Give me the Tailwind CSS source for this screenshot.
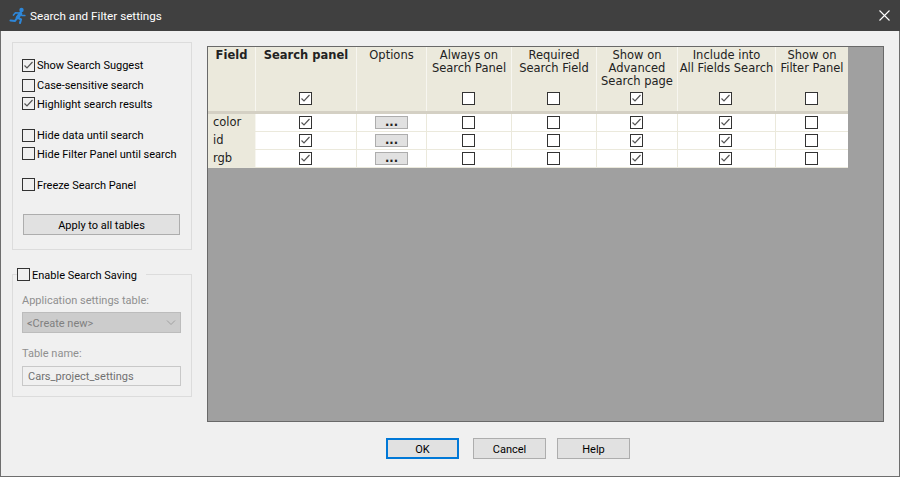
<!DOCTYPE html>
<html><head><meta charset="utf-8"><script src="https://cdn.jsdelivr.net/npm/@tailwindcss/browser@4"></script></head>
<body class="m-0 overflow-hidden">
<div class="w-[900px] h-[477px] bg-[#f0f0f0] border border-[#6e6e6e] border-t-0 flex flex-col font-['Roboto',sans-serif] text-[11px] text-[#000] leading-[14px] whitespace-nowrap">
  <div class="h-[31px] bg-[#404040] flex items-center pl-[9px] pr-[9px] text-white text-[11.7px] shrink-0 -mx-px">
    <svg width="17" height="17" viewBox="0 0 17 17" class="mr-[4px]" fill="none" stroke="#2e87d9" stroke-linecap="round" stroke-linejoin="round"><circle cx="12.500" cy="3" r="2.200" fill="#2e87d9" stroke="none"/><path d="M11.500 6.500 8.500 10.500" stroke-width="3.600"/><path d="M10.500 6 6.500 5.800 4.500 8M11.500 6.500 13 8.500 15.800 8.500" stroke-width="1.700"/><path d="M8.500 10.500 12 12.500 11 16M8 11 6 14 1.500 13.500" stroke-width="2.100"/></svg>
    <span class="flex-1">Search and Filter settings</span>
    <svg width="11" height="11" viewBox="0 0 11 11" class="mr-[1px]"><path d="M.5.500l10 10M10.500.500l-10 10" stroke="#fff" stroke-width="1.100" fill="none"/></svg>
  </div>
  <div class="flex flex-1 min-h-0">
    <div class="w-[180px] ml-[11px] mt-[11px] shrink-0">
      <div class="h-[208px] border border-[#dcdcdc] pl-[9px] pr-[11px] pt-[15px] flex flex-col">
        <label class="flex items-center h-[15px] gap-[1px]"><span class="w-[13px] h-[13px] border border-[#333] flex items-center justify-center shrink-0 mr-[1px]"><svg width="11" height="11" viewBox="0 0 11 11"><path d="M1.500 5.500l2.500 2.500 5.500-6" stroke="#555" stroke-width="1.200" fill="none"/></svg></span>Show Search Suggest</label>
        <label class="flex items-center h-[15px] gap-[1px] mt-[5px]"><span class="w-[13px] h-[13px] border border-[#333] shrink-0 mr-[1px]"></span>Case-sensitive search</label>
        <label class="flex items-center h-[15px] gap-[1px] mt-[4px]"><span class="w-[13px] h-[13px] border border-[#333] -translate-y-px flex items-center justify-center shrink-0 mr-[1px]"><svg width="11" height="11" viewBox="0 0 11 11"><path d="M1.500 5.500l2.500 2.500 5.500-6" stroke="#555" stroke-width="1.200" fill="none"/></svg></span>Highlight search results</label>
        <label class="flex items-center h-[15px] gap-[1px] mt-[16px]"><span class="w-[13px] h-[13px] border border-[#333] shrink-0 mr-[1px]"></span>Hide data until search</label>
        <label class="flex items-center h-[15px] gap-[1px] mt-[4px]"><span class="w-[13px] h-[13px] border border-[#333] -translate-y-px shrink-0 mr-[1px]"></span>Hide Filter Panel until search</label>
        <label class="flex items-center h-[15px] gap-[1px] mt-[16px]"><span class="w-[13px] h-[13px] border border-[#333] -translate-y-px shrink-0 mr-[1px]"></span>Freeze Search Panel</label>
        <button class="mt-[21px] ml-[1px] h-[21px] w-[157px] shrink-0 bg-[#e1e1e1] border border-[#adadad] text-center pt-[2px]">Apply to all tables</button>
      </div>
      <div class="relative mt-[24px] h-[123px] border border-[#dcdcdc] pl-[9px] pr-[10px] pt-[18px] text-[#8f8f8f]">
        <label class="absolute left-[4px] -top-[8px] bg-[#f0f0f0] flex items-center h-[15px] pr-[9px] text-black"><span class="w-[13px] h-[13px] border border-[#333] shrink-0 mr-[2px]"></span><span class="translate-y-px">Enable Search Saving</span></label>
        <div class="h-[14px] translate-y-px">Application settings table:</div>
        <div class="mt-[5px] h-[21px] w-[159px] bg-[#cccccc] border border-[#bcbcbc] flex items-center justify-between pl-[4px] pr-[4px] text-[#808080]"><span class="translate-y-px">&lt;Create new&gt;</span><svg width="10" height="6" viewBox="0 0 10 6"><path d="M1 .500l4 4 4-4" stroke="#a0a0a0" fill="none"/></svg></div>
        <div class="mt-[13px] h-[14px] translate-y-px">Table name:</div>
        <div class="mt-[6px] h-[20px] w-[159px] border border-[#c8c8c8] flex items-center pl-[5px] text-[#707070]"><span class="translate-y-px">Cars_project_settings</span></div>
      </div>
    </div>
    <div class="flex-1 min-w-0 flex flex-col">
      <div class="ml-[15px] mr-[15px] mt-[15px] h-[376px] bg-[#a0a0a0] border border-[#696969] shrink-0 font-['DejaVu_Sans',sans-serif] text-[11.500px] leading-[13px]">
        <div class="w-[640px] flex h-[64px] bg-[#ebe9dc] text-[#222] text-center">
          <div class="w-[48px] border-r border-[#f7f6f0] pt-[2px] font-bold">Field</div>
          <div class="w-[101px] border-r border-[#f7f6f0] pt-[2px] font-bold flex flex-col items-center justify-between pb-[6px]"><span>Search panel</span><span class="w-[13px] h-[13px] -ml-[2px] border border-[#333] bg-white flex items-center justify-center"><svg width="11" height="11" viewBox="0 0 11 11"><path d="M1.500 5.500l2.500 2.500 5.500-6" stroke="#555" stroke-width="1.200" fill="none"/></svg></span></div>
          <div class="w-[70px] border-r border-[#f7f6f0] pt-[2px]">Options</div>
          <div class="w-[85px] border-r border-[#f7f6f0] pt-[2px] flex flex-col items-center justify-between pb-[6px]"><span>Always on<br>Search Panel</span><span class="w-[13px] h-[13px] -ml-[2px] border border-[#333] bg-white"></span></div>
          <div class="w-[85px] border-r border-[#f7f6f0] pt-[2px] flex flex-col items-center justify-between pb-[6px]"><span>Required<br>Search Field</span><span class="w-[13px] h-[13px] -ml-[2px] border border-[#333] bg-white"></span></div>
          <div class="w-[81px] border-r border-[#f7f6f0] pt-[2px] flex flex-col items-center justify-between pb-[6px]"><span>Show on<br>Advanced<br>Search page</span><span class="w-[13px] h-[13px] -ml-[2px] border border-[#333] bg-white flex items-center justify-center"><svg width="11" height="11" viewBox="0 0 11 11"><path d="M1.500 5.500l2.500 2.500 5.500-6" stroke="#555" stroke-width="1.200" fill="none"/></svg></span></div>
          <div class="w-[98px] border-r border-[#f7f6f0] pt-[2px] flex flex-col items-center justify-between pb-[6px]"><span>Include into<br>All Fields Search</span><span class="w-[13px] h-[13px] -ml-[2px] border border-[#333] bg-white flex items-center justify-center"><svg width="11" height="11" viewBox="0 0 11 11"><path d="M1.500 5.500l2.500 2.500 5.500-6" stroke="#555" stroke-width="1.200" fill="none"/></svg></span></div>
          <div class="w-[72px] pt-[2px] flex flex-col items-center justify-between pb-[6px]"><span>Show on<br>Filter Panel</span><span class="w-[13px] h-[13px] -ml-[2px] border border-[#333] bg-white"></span></div>
        </div>
        <div class="w-[640px] h-[3px] bg-[#d4d0c4]"></div>
        <div class="w-[640px] flex h-[18px] bg-white border-b border-[#ebe9dc] items-center text-[#222]">
          <div class="w-[48px] h-full bg-[#ebe9dc] border-r border-[#f7f6f0] pl-[5px] flex items-center">color</div>
          <div class="w-[101px] h-full border-r border-[#ebe9dc] pr-[2px] flex items-center justify-center"><span class="w-[13px] h-[13px] border border-[#333] flex items-center justify-center"><svg width="11" height="11" viewBox="0 0 11 11"><path d="M1.500 5.500l2.500 2.500 5.500-6" stroke="#555" stroke-width="1.200" fill="none"/></svg></span></div>
          <div class="w-[70px] h-full border-r border-[#ebe9dc] flex items-center justify-center"><span class="w-[33px] h-[13px] bg-[#e1e1e1] border border-[#adadad] text-center leading-[10px] font-bold">...</span></div>
          <div class="w-[85px] h-full border-r border-[#ebe9dc] pr-[2px] flex items-center justify-center"><span class="w-[13px] h-[13px] border border-[#333]"></span></div>
          <div class="w-[85px] h-full border-r border-[#ebe9dc] pr-[2px] flex items-center justify-center"><span class="w-[13px] h-[13px] border border-[#333]"></span></div>
          <div class="w-[81px] h-full border-r border-[#ebe9dc] pr-[2px] flex items-center justify-center"><span class="w-[13px] h-[13px] border border-[#333] flex items-center justify-center"><svg width="11" height="11" viewBox="0 0 11 11"><path d="M1.500 5.500l2.500 2.500 5.500-6" stroke="#555" stroke-width="1.200" fill="none"/></svg></span></div>
          <div class="w-[98px] h-full border-r border-[#ebe9dc] pr-[2px] flex items-center justify-center"><span class="w-[13px] h-[13px] border border-[#333] flex items-center justify-center"><svg width="11" height="11" viewBox="0 0 11 11"><path d="M1.500 5.500l2.500 2.500 5.500-6" stroke="#555" stroke-width="1.200" fill="none"/></svg></span></div>
          <div class="w-[72px] h-full pr-[2px] flex items-center justify-center"><span class="w-[13px] h-[13px] border border-[#333]"></span></div>
        </div>
        <div class="w-[640px] flex h-[18px] bg-white border-b border-[#ebe9dc] items-center text-[#222]">
          <div class="w-[48px] h-full bg-[#ebe9dc] border-r border-[#f7f6f0] pl-[5px] flex items-center">id</div>
          <div class="w-[101px] h-full border-r border-[#ebe9dc] pr-[2px] flex items-center justify-center"><span class="w-[13px] h-[13px] border border-[#333] flex items-center justify-center"><svg width="11" height="11" viewBox="0 0 11 11"><path d="M1.500 5.500l2.500 2.500 5.500-6" stroke="#555" stroke-width="1.200" fill="none"/></svg></span></div>
          <div class="w-[70px] h-full border-r border-[#ebe9dc] flex items-center justify-center"><span class="w-[33px] h-[13px] bg-[#e1e1e1] border border-[#adadad] text-center leading-[10px] font-bold">...</span></div>
          <div class="w-[85px] h-full border-r border-[#ebe9dc] pr-[2px] flex items-center justify-center"><span class="w-[13px] h-[13px] border border-[#333]"></span></div>
          <div class="w-[85px] h-full border-r border-[#ebe9dc] pr-[2px] flex items-center justify-center"><span class="w-[13px] h-[13px] border border-[#333]"></span></div>
          <div class="w-[81px] h-full border-r border-[#ebe9dc] pr-[2px] flex items-center justify-center"><span class="w-[13px] h-[13px] border border-[#333] flex items-center justify-center"><svg width="11" height="11" viewBox="0 0 11 11"><path d="M1.500 5.500l2.500 2.500 5.500-6" stroke="#555" stroke-width="1.200" fill="none"/></svg></span></div>
          <div class="w-[98px] h-full border-r border-[#ebe9dc] pr-[2px] flex items-center justify-center"><span class="w-[13px] h-[13px] border border-[#333] flex items-center justify-center"><svg width="11" height="11" viewBox="0 0 11 11"><path d="M1.500 5.500l2.500 2.500 5.500-6" stroke="#555" stroke-width="1.200" fill="none"/></svg></span></div>
          <div class="w-[72px] h-full pr-[2px] flex items-center justify-center"><span class="w-[13px] h-[13px] border border-[#333]"></span></div>
        </div>
        <div class="w-[640px] flex h-[18px] bg-white border-b border-[#ebe9dc] items-center text-[#222]">
          <div class="w-[48px] h-full bg-[#ebe9dc] border-r border-[#f7f6f0] pl-[5px] flex items-center">rgb</div>
          <div class="w-[101px] h-full border-r border-[#ebe9dc] pr-[2px] flex items-center justify-center"><span class="w-[13px] h-[13px] border border-[#333] flex items-center justify-center"><svg width="11" height="11" viewBox="0 0 11 11"><path d="M1.500 5.500l2.500 2.500 5.500-6" stroke="#555" stroke-width="1.200" fill="none"/></svg></span></div>
          <div class="w-[70px] h-full border-r border-[#ebe9dc] flex items-center justify-center"><span class="w-[33px] h-[13px] bg-[#e1e1e1] border border-[#adadad] text-center leading-[10px] font-bold">...</span></div>
          <div class="w-[85px] h-full border-r border-[#ebe9dc] pr-[2px] flex items-center justify-center"><span class="w-[13px] h-[13px] border border-[#333]"></span></div>
          <div class="w-[85px] h-full border-r border-[#ebe9dc] pr-[2px] flex items-center justify-center"><span class="w-[13px] h-[13px] border border-[#333]"></span></div>
          <div class="w-[81px] h-full border-r border-[#ebe9dc] pr-[2px] flex items-center justify-center"><span class="w-[13px] h-[13px] border border-[#333] flex items-center justify-center"><svg width="11" height="11" viewBox="0 0 11 11"><path d="M1.500 5.500l2.500 2.500 5.500-6" stroke="#555" stroke-width="1.200" fill="none"/></svg></span></div>
          <div class="w-[98px] h-full border-r border-[#ebe9dc] pr-[2px] flex items-center justify-center"><span class="w-[13px] h-[13px] border border-[#333] flex items-center justify-center"><svg width="11" height="11" viewBox="0 0 11 11"><path d="M1.500 5.500l2.500 2.500 5.500-6" stroke="#555" stroke-width="1.200" fill="none"/></svg></span></div>
          <div class="w-[72px] h-full pr-[2px] flex items-center justify-center"><span class="w-[13px] h-[13px] border border-[#333]"></span></div>
        </div>
      </div>
      <div class="mt-[16px] ml-[194px] flex gap-[14px]">
        <button class="w-[73px] h-[21px] bg-[#e1e1e1] border-2 border-[#0078d7] pt-[2px]">OK</button>
        <button class="w-[73px] h-[21px] bg-[#e1e1e1] border border-[#adadad] pt-[2px]">Cancel</button>
        <button class="w-[73px] h-[21px] bg-[#e1e1e1] border border-[#adadad] -ml-[3px] pt-[2px]">Help</button>
      </div>
    </div>
  </div>
</div>
</body></html>
